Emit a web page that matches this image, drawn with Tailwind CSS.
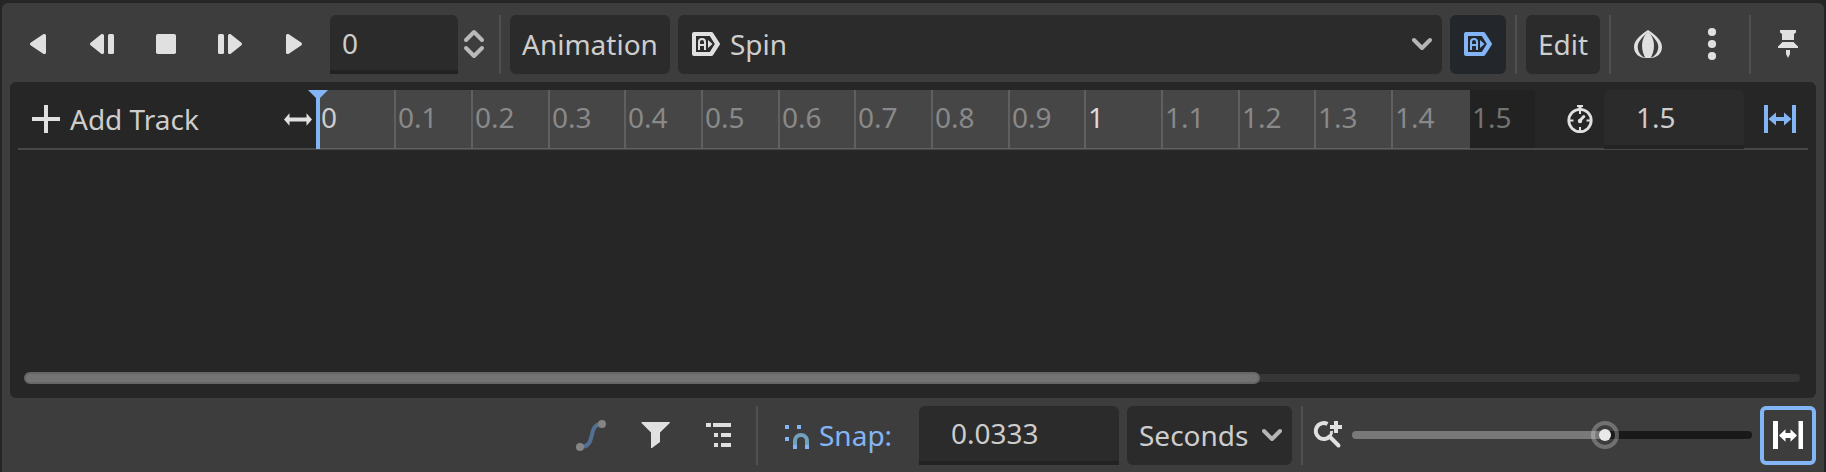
<!DOCTYPE html>
<html lang="en">
<head>
<meta charset="utf-8">
<title>Animation</title>
<script src="https://cdn.jsdelivr.net/npm/@tailwindcss/browser@4"></script>
</head>
<body class="h-[472px] w-[1826px] overflow-hidden bg-[#252525] px-[2px] pt-[3px] font-['Noto_Sans',sans-serif] text-[28px] leading-[38px] text-[#cdcdcd]">
<main class="flex h-[469px] flex-col rounded-t-[6px] bg-[#3d3d3d] px-2 pt-3">

  <!-- Playback toolbar -->
  <header class="flex h-[59px] shrink-0 whitespace-pre">
    <svg class="ml-[12px] h-[59px] w-[60px] shrink-0" viewBox="22 15 60 59" fill="#e0e0e0"><path d="M46 35.600v16.800c0 1.400-1.600 2.100-2.800 1.400l-12.300-8.200c-1.200-.8-1.200-2.400 0-3.200l12.300-8.200c1.200-.7 2.800 0 2.800 1.400z"/></svg>
    <svg class="h-[59px] w-[64px] shrink-0" viewBox="82 15 64 59" fill="#e0e0e0"><path d="M104 35.600v16.800c0 1.400-1.600 2.100-2.800 1.400l-10.300-8.200c-1.200-.8-1.200-2.400 0-3.200l10.300-8.200c1.200-.7 2.800 0 2.800 1.400z"/><rect x="108" y="34" width="6" height="20" rx="1.500"/></svg>
    <svg class="h-[59px] w-[64px] shrink-0" viewBox="146 15 64 59" fill="#e0e0e0"><rect x="156" y="34" width="20" height="20" rx="1.800"/></svg>
    <svg class="h-[59px] w-[64px] shrink-0" viewBox="210 15 64 59" fill="#e0e0e0"><rect x="218" y="34" width="6" height="20" rx="1.500"/><path d="M228 35.600v16.800c0 1.400 1.600 2.100 2.800 1.400l10.300-8.200c1.200-.8 1.200-2.400 0-3.200l-10.300-8.200c-1.200-.7-2.800 0-2.800 1.400z"/></svg>
    <svg class="h-[59px] w-[56px] shrink-0" viewBox="274 15 56 59" fill="#e0e0e0"><path d="M286 35.600v16.800c0 1.400 1.600 2.100 2.800 1.400l12.300-8.200c1.200-.8 1.200-2.400 0-3.200l-12.300-8.200c-1.200-.7-2.800 0-2.800 1.400z"/></svg>
    <div class="flex w-[128px] items-center rounded-t-[6px] border-b-4 border-[#222222] bg-[#2b2b2b] pl-3">0</div>
    <svg class="h-[59px] w-[41px] shrink-0" viewBox="458 15 41 59" fill="none" stroke="#b9b9b9" stroke-width="4" stroke-linecap="round" stroke-linejoin="round"><path d="M466 40l8-8 8 8M466 48l8 8 8-8"/></svg>
    <div class="w-[2px] bg-[#505050]"></div>
    <div class="ml-[9px] flex w-[160px] items-center rounded-[6px] bg-[#2b2b2b] pb-px pl-3">Animation</div>
    <div class="ml-2 flex w-[764px] items-center rounded-[6px] bg-[#2b2b2b] pr-[10px] pb-px pl-[14px]">
      <svg class="h-[24px] w-[28px] shrink-0" viewBox="0 0 28 24"><path fill="#e0e0e0" fill-rule="evenodd" d="M2 0h17.500q1 0 1.500.8l6.600 10.200q.8 1 0 2L21 23.200q-.5.8-1.500.8H2q-2 0-2-2V2q0-2 2-2zM4 4v16h13.800l5-8-5-8z"/><path fill="none" stroke="#e0e0e0" stroke-width="2" d="M7 18v-8q0-3 3-3t3 3v8M7 13h6"/><path fill="#e0e0e0" d="M16 8l4.500 4-4.500 4z"/></svg>
      <span class="ml-[10px] flex-1">Spin</span>
      <svg class="h-[16px] w-[20px]" viewBox="0 0 20 16" fill="none" stroke="#b5b5b5" stroke-width="4" stroke-linecap="round" stroke-linejoin="round"><path d="M2 4l8 8 8-8"/></svg>
    </div>
    <div class="ml-2 flex w-[56px] items-center justify-center rounded-[6px] bg-[#23272c] pb-px">
      <svg class="h-[24px] w-[28px]" viewBox="0 0 28 24"><path fill="#83b5f6" fill-rule="evenodd" d="M2 0h17.500q1 0 1.500.8l6.600 10.200q.8 1 0 2L21 23.200q-.5.8-1.500.8H2q-2 0-2-2V2q0-2 2-2zM4 4v16h13.800l5-8-5-8z"/><path fill="none" stroke="#83b5f6" stroke-width="2" d="M7 18v-8q0-3 3-3t3 3v8M7 13h6"/><path fill="#83b5f6" d="M16 8l4.500 4-4.500 4z"/></svg>
    </div>
    <div class="ml-[9px] w-[2px] bg-[#505050]"></div>
    <div class="ml-[9px] flex w-[74px] items-center justify-center rounded-[6px] bg-[#2b2b2b] pb-px">Edit</div>
    <div class="ml-[9px] w-[2px] bg-[#505050]"></div>
    <svg class="h-[59px] w-[77px] shrink-0" viewBox="1611 15 77 59" fill="#e0e0e0"><path fill-rule="evenodd" d="M1648 30c6 4 14 9.500 14 17 0 7-6 11-11 11h-6c-5 0-11-4-11-11 0-7.500 8-13 14-17zM1648 32c-5 5-10.300 9-10.300 15 0 5 3.500 9.500 7.300 10.500h6c3.800-1 7.300-5.500 7.300-10.500 0-6-5.300-10-10.300-15z"/><path d="M1648 31.500c4 4 6 8.500 6 14 0 5-1.500 9.500-3.500 12.500h-5c-2-3-3.500-7.500-3.500-12.500 0-5.500 2-10 6-14z"/></svg>
    <svg class="h-[59px] w-[61px] shrink-0" viewBox="1688 15 61 59" fill="#e0e0e0"><circle cx="1712" cy="32" r="4.100"/><circle cx="1712" cy="44" r="4.100"/><circle cx="1712" cy="56" r="4.100"/></svg>
    <div class="w-[2px] bg-[#505050]"></div>
    <svg class="h-[59px] w-[65px] shrink-0" viewBox="1751 15 65 59" fill="#e0e0e0"><path d="M1780 30h16v2.500l-2 1.500v6h-12v-6l-2-1.500zM1782.500 42h11l4.500 4.500v1.500h-20v-1.500zM1786 50h4v4l-2 4-2-4z"/></svg>
  </header>

  <!-- Track editor -->
  <section class="mt-2 flex h-[316px] shrink-0 flex-col rounded-[6px] bg-[#262626] px-2 pt-2">
    <div class="flex h-[60px] whitespace-pre border-b-2 border-[#474747]">
      <svg class="h-[58px] w-[52px] shrink-0" viewBox="18 90 52 58" fill="#e0e0e0"><path d="M44 105h4v12h12v4H48v12h-4v-12H32v-4h12z"/></svg>
      <span class="w-[214px] pt-[10px]">Add Track</span>
      <svg class="h-[58px] w-[32px] shrink-0" viewBox="284 90 32 58" fill="#e0e0e0"><path d="M284 119.500l5.500-6.200v4.200h17v-4.200l5.500 6.200-5.500 6.200v-4.200h-17v4.200z"/></svg>
      <div class="relative flex h-[60px] shrink-0 text-[#898989]">
        <div class="ml-px flex h-[60px] border-b border-[#474747] bg-[#464646]">
          <div class="flex h-[59px] border-b border-[#606060] [&>span]:border-l-2 [&>span]:border-[#606060] [&>span]:pt-[8px] [&>span]:pl-[2px]">
            <span class="w-[77px] text-[#cdcdcd]">0</span><span class="w-[77px]">0.1</span><span class="w-[77px]">0.2</span><span class="w-[76px]">0.3</span><span class="w-[77px]">0.4</span><span class="w-[77px]">0.5</span><span class="w-[76px]">0.6</span><span class="w-[77px]">0.7</span><span class="w-[77px]">0.8</span><span class="w-[76px]">0.9</span><span class="w-[77px] text-[#dcdcdc]">1</span><span class="w-[77px]">1.1</span><span class="w-[76px]">1.2</span><span class="w-[77px]">1.3</span><span class="w-[79px]">1.4</span>
          </div>
        </div>
        <div class="h-[58px] w-[65px] bg-[#222222] pt-[8px] pl-[2px] text-[#737373]">1.5</div>
        <svg class="absolute top-0 -left-[8px] h-[59px] w-[20px]" viewBox="0 0 20 59" fill="#83b5f6"><path d="M0 0h20l-8 8v51H8V8z"/></svg>
      </div>
      <svg class="h-[58px] w-[69px] shrink-0" viewBox="1535 90 69 58"><g fill="none" stroke="#e0e0e0"><circle cx="1580" cy="120.500" r="11.200" stroke-width="2.800"/><path stroke-width="2" d="M1580 110v4M1580 127v4M1569.500 120.500h4M1586.500 120.500h4"/><path stroke-width="3" stroke-linecap="round" d="M1580 120.500l3.800-4"/></g><path fill="#e0e0e0" d="M1577 105h6v2h-1.500v3h-3v-3h-1.500z"/><circle cx="1580" cy="121" r="2.200" fill="#e0e0e0"/></svg>
      <div class="h-[59px] w-[140px] shrink-0 rounded-t-[6px] border-b-4 border-[#232323] bg-[#2b2b2b] pt-[8px] pl-[32px]">1.5</div>
      <svg class="h-[58px] w-[64px] shrink-0" viewBox="1744 90 64 58" fill="#83b5f6"><path d="M1764 105h4v28h-4zM1792 105h4v28h-4zM1768.500 119l7.500-6.500v4.500h8v-4.500l7.500 6.500-7.500 6.500v-4.500h-8v4.500z"/></svg>
    </div>
    <div class="mt-[222px] ml-[6px] flex h-[12px] w-[1776px] items-center">
      <div class="z-10 h-[12px] w-[1236px] rounded-full border-2 border-[#666666] bg-[#737373]"></div>
      <div class="-ml-[6px] h-[8px] w-[546px] rounded-r-[4px] bg-[#363636]"></div>
    </div>
  </section>

  <!-- Footer tools -->
  <footer class="mt-2 flex h-[59px] shrink-0 whitespace-pre">
    <svg class="ml-[554px] h-[59px] w-[64px] shrink-0" viewBox="564 406 64 59"><path d="M580 447c18 0 6-23 22-23" fill="none" stroke="#536f91" stroke-width="4"/><circle cx="580" cy="447" r="4" fill="#858585"/><circle cx="602" cy="424" r="4" fill="#858585"/></svg>
    <svg class="h-[59px] w-[64px] shrink-0" viewBox="628 406 64 59"><path fill="#e0e0e0" d="M641.500 422h28.300v1l-9.800 9.500v9.500l-8 6h-1v-15.500l-9.500-9.500z"/></svg>
    <svg class="h-[59px] w-[64px] shrink-0" viewBox="692 406 64 59" fill="#e0e0e0"><path d="M706 423h5v4h-5zM713 423h18v4h-18zM714 433h4v4h-4zM721 433h10v4h-10zM714 443h4v4h-4zM721 443h10v4h-10z"/></svg>
    <div class="w-[2px] bg-[#505050]"></div>
    <svg class="h-[59px] w-[61px] shrink-0" viewBox="758 406 61 59"><path d="M795 445v-4a6 6 0 0 1 12 0v4" fill="none" stroke="#73a1bd" stroke-width="4"/><path fill="#83b5f6" d="M793 445h4v4h-4zM805 445h4v4h-4zM785 425h4v4h-4zM797 425h4v4h-4zM785 437h4v4h-4z"/></svg>
    <span class="w-[100px] pt-[10px] text-[#83b5f6]">Snap:</span>
    <div class="flex w-[200px] items-center rounded-t-[6px] border-b-4 border-[#222222] bg-[#2b2b2b] pb-px pl-[32px]">0.0333</div>
    <div class="ml-2 flex w-[165px] items-center justify-between rounded-[6px] bg-[#2b2b2b] pr-[10px] pb-px pl-3">Seconds<svg class="h-[16px] w-[20px]" viewBox="0 0 20 16" fill="none" stroke="#b5b5b5" stroke-width="4" stroke-linecap="round" stroke-linejoin="round"><path d="M2 4l8 8 8-8"/></svg></div>
    <div class="ml-[9px] w-[2px] bg-[#505050]"></div>
    <svg class="h-[59px] w-[49px] shrink-0" viewBox="1303 406 49 59"><path d="M1327.500 424a8 8 0 1 0 2.500 12" fill="none" stroke="#e0e0e0" stroke-width="4"/><path d="M1331.500 431q.5 3-2 6" fill="none" stroke="#e0e0e0" stroke-width="3"/><path d="M1329.500 436.500l9 9" fill="none" stroke="#e0e0e0" stroke-width="4" stroke-linecap="round"/><path fill="#e0e0e0" d="M1334 421h4v4h4v4h-4v4h-4v-4h-4v-4h4z"/></svg>
    <div class="relative flex w-[400px] items-center pb-px">
      <div class="h-[8px] w-[253px] rounded-l-[4px] bg-[#797979]"></div>
      <div class="h-[8px] flex-1 rounded-r-[4px] bg-[#191919]"></div>
      <svg class="absolute top-[15px] left-[239px] size-[28px]" viewBox="0 0 28 28"><circle cx="14" cy="14" r="12" fill="none" stroke="#e0e0e0" stroke-opacity=".32" stroke-width="4"/><circle cx="14" cy="14" r="6" fill="#e9e9e9"/></svg>
    </div>
    <svg class="ml-2 h-[59px] w-[56px] shrink-0 rounded-[6px] border-4 border-[#83b5f6]" viewBox="1764 410 48 51" fill="#ffffff"><path d="M1773 421h5v28h-5zM1798.500 421h4.500v28h-4.500zM1779 435.500l6.500-6.300v3.800h5v-3.800l6.500 6.300-6.500 6.300v-3.800h-5v3.800z"/></svg>
  </footer>
</main>
</body>
</html>
